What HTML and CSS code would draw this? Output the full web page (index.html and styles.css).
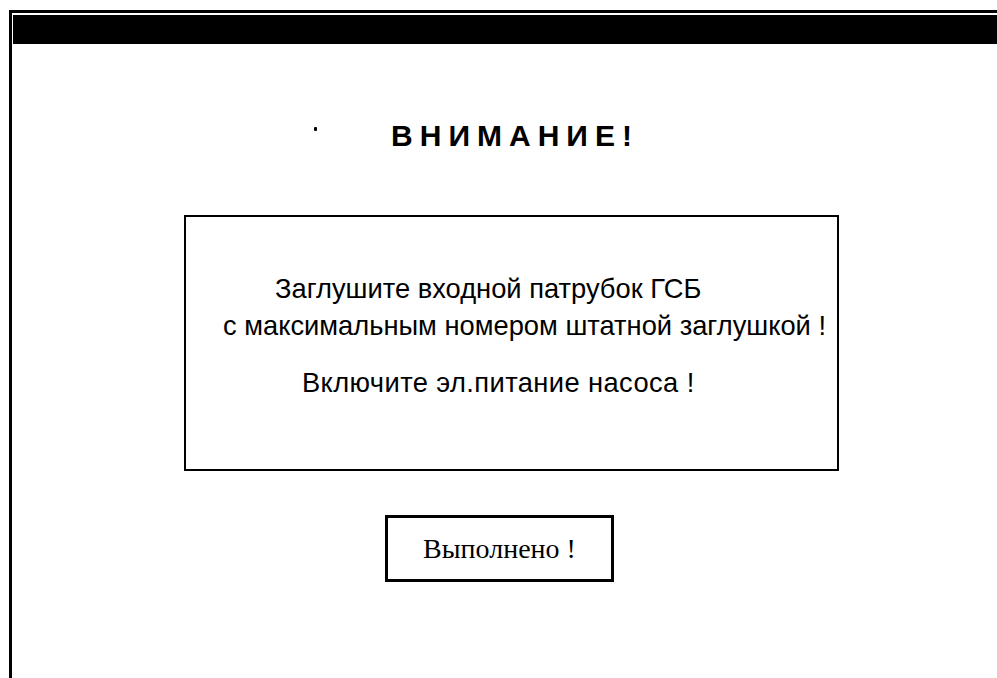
FILE: index.html
```html
<!DOCTYPE html>
<html lang="ru">
<head>
<meta charset="utf-8">
<title>Внимание</title>
<link rel="stylesheet" href="styles.css">
</head>
<body>
<div class="screen">
  <div class="titlebar"></div>
  <div class="content">
    <div class="heading">
      <span class="mark"></span>
      <h1 class="title">ВНИМАНИЕ!</h1>
    </div>
    <div class="message">
      <p class="line line-first">Заглушите входной патрубок ГСБ</p>
      <p class="line line-second">с максимальным номером штатной заглушкой !</p>
      <p class="line line-third">Включите эл.питание насоса !</p>
    </div>
    <button class="done" type="button">Выполнено !</button>
  </div>
</div>
</body>
</html>
```

FILE: styles.css
```css
html, body {
  margin: 0;
  padding: 0;
  background: #fff;
  width: 997px;
  height: 678px;
  overflow: hidden;
}

.screen {
  margin: 10px 0 0 9px;
  height: 668px;
  border-top: 3px solid #000;
  border-left: 3px solid #000;
  box-sizing: border-box;
  display: flex;
  flex-direction: column;
}

.titlebar {
  margin: 2px 0 0 1px;
  height: 29px;
  background: #000;
}

.content {
  display: flex;
  flex-direction: column;
  align-items: center;
  padding-left: 14px;
}

.heading {
  position: relative;
  margin-top: 72px;
  height: 40px;
  display: flex;
  align-items: center;
}

.mark {
  position: absolute;
  left: -70px;
  top: 11px;
  width: 3px;
  height: 4px;
  background: #000;
  border-radius: 1px;
}

.title {
  margin: 0 0 0 7px;
  font-family: "Liberation Sans", Arial, sans-serif;
  font-weight: bold;
  font-size: 30px;
  letter-spacing: 7px;
  color: #000;
  line-height: 40px;
}

.message {
  margin-top: 59px;
  width: 651px;
  height: 252px;
  border: 2px solid #000;
  font-family: "Liberation Sans", Arial, sans-serif;
  font-size: 27.3px;
  color: #000;
}

.line {
  margin: 0;
  line-height: 37px;
  white-space: nowrap;
}

.line-first {
  margin-top: 53px;
  padding-left: 89px;
}

.line-second {
  padding-left: 37px;
}

.line-third {
  margin-top: 20px;
  padding-left: 116px;
  letter-spacing: 0.4px;
}

.done {
  margin-top: 44px;
  margin-right: 24px;
  width: 229px;
  height: 67px;
  border: 3px solid #000;
  background: #fff;
  font-family: "Liberation Serif", "Times New Roman", serif;
  font-size: 28px;
  color: #000;
  padding: 0;
}
```
